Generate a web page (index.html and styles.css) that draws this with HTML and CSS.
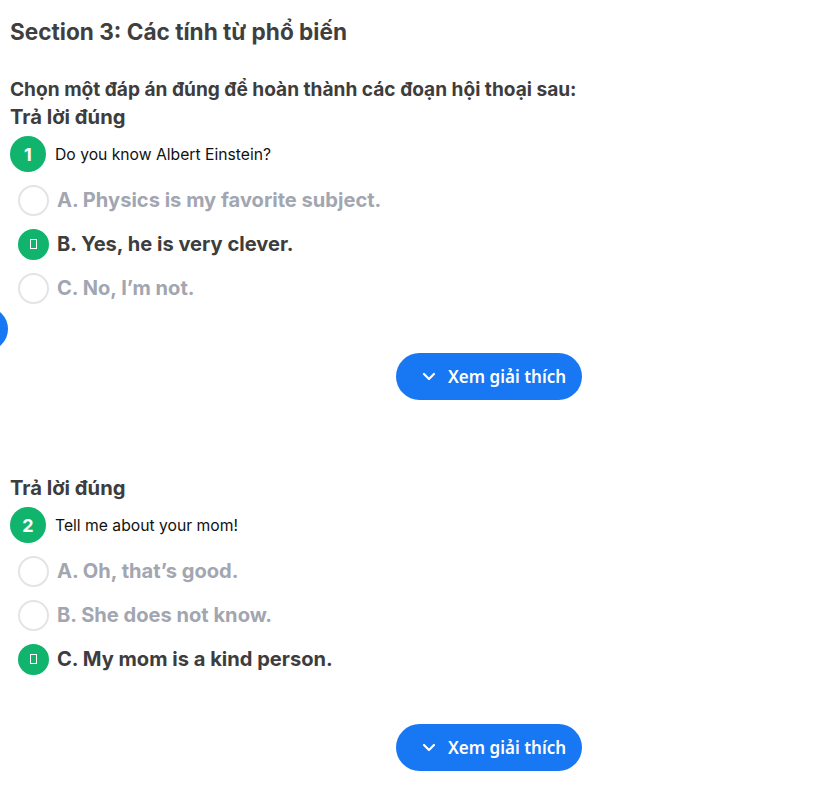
FILE: index.html
```html
<!DOCTYPE html>
<html lang="vi">
<head>
<meta charset="utf-8">
<title>Section 3</title>
<link rel="stylesheet" href="styles.css">
</head>
<body>
<div class="page">
  <h1 class="title">Section 3: Các tính từ phổ biến</h1>
  <p class="instr">Chọn một đáp án đúng để hoàn thành các đoạn hội thoại sau:</p>

  <section class="question">
    <div class="status">Trả lời đúng</div>
    <div class="qrow">
      <span class="num">1</span>
      <span class="qtext">Do you know Albert Einstein?</span>
    </div>
    <div class="options">
      <div class="opt"><span class="radio"></span><span class="otext">A. Physics is my favorite subject.</span></div>
      <div class="opt selected"><span class="radio"><span class="tofu"></span></span><span class="otext">B. Yes, he is very clever.</span></div>
      <div class="opt"><span class="radio"></span><span class="otext">C. No, I’m not.</span></div>
    </div>
    <div class="actions">
      <button class="explain"><svg class="chev" width="14" height="9" viewBox="0 0 14 9"><polyline points="2,2 7,7 12,2" fill="none" stroke="#fff" stroke-width="2.2" stroke-linecap="round" stroke-linejoin="round"/></svg>Xem giải thích</button>
    </div>
  </section>

  <section class="question second">
    <div class="status">Trả lời đúng</div>
    <div class="qrow">
      <span class="num">2</span>
      <span class="qtext">Tell me about your mom!</span>
    </div>
    <div class="options">
      <div class="opt"><span class="radio"></span><span class="otext">A. Oh, that’s good.</span></div>
      <div class="opt"><span class="radio"></span><span class="otext">B. She does not know.</span></div>
      <div class="opt selected"><span class="radio"><span class="tofu"></span></span><span class="otext">C. My mom is a kind person.</span></div>
    </div>
    <div class="actions">
      <button class="explain"><svg class="chev" width="14" height="9" viewBox="0 0 14 9"><polyline points="2,2 7,7 12,2" fill="none" stroke="#fff" stroke-width="2.2" stroke-linecap="round" stroke-linejoin="round"/></svg>Xem giải thích</button>
    </div>
  </section>
</div>
<div class="fab"></div>
</body>
</html>
```

FILE: styles.css
```css
* { box-sizing: border-box; }
html, body { margin: 0; padding: 0; background: #fff; }
body { font-family: Inter, "Noto Sans", sans-serif; color: #3d3d3d; }

.page { padding: 17px 10px 0 10px; }

.title {
  margin: 0;
  font-size: 22.6px;
  line-height: 30px;
  font-weight: 700;
  color: #3f3f3f;
}

.instr {
  margin: 29px 0 0 0;
  font-size: 19.1px;
  line-height: 27px;
  font-weight: 700;
  color: #3d3d3d;
}

.status {
  font-size: 20.2px;
  line-height: 27px;
  font-weight: 700;
  color: #3d3d3d;
}

.question.second { margin-top: 74px; }

.qrow {
  display: flex;
  align-items: center;
  gap: 9px;
  margin-top: 6px;
}

.num {
  width: 36px;
  height: 36px;
  border-radius: 50%;
  background: #10b46d;
  color: #fff;
  font-weight: 700;
  font-size: 18px;
  display: flex;
  align-items: center;
  justify-content: center;
}

.qtext {
  font-size: 15.7px;
  color: #111;
  font-weight: 400;
}

.options {
  display: flex;
  flex-direction: column;
  gap: 14px;
  margin-top: 13px;
  padding-left: 8px;
}

.opt {
  display: flex;
  align-items: center;
  gap: 8px;
  height: 30px;
}

.radio {
  width: 31px;
  height: 31px;
  border-radius: 50%;
  border: 2px solid #e3e4e8;
  display: flex;
  align-items: center;
  justify-content: center;
  flex: none;
}

.opt.selected .radio {
  background: #10b46d;
  border-color: #10b46d;
}

.tofu {
  width: 7px;
  height: 10px;
  border: 1px solid #fff;
}

.otext {
  font-size: 20.1px;
  font-weight: 700;
  color: #a2a6b0;
}

.opt.selected .otext { color: #3d3d3d; }

.actions {
  margin-top: 50px;
  padding-left: 386px;
}

.explain {
  display: flex;
  align-items: center;
  gap: 12px;
  height: 47px;
  width: 186px;
  padding: 0 0 0 26px;
  border: none;
  border-radius: 24px;
  background: #1877f2;
  color: #fff;
  font-family: "Noto Sans", "Open Sans", sans-serif;
  font-size: 17px;
  font-weight: 600;
  cursor: pointer;
}

.chev { flex: none; }

.fab {
  position: absolute;
  left: -36px;
  top: 307px;
  width: 44px;
  height: 44px;
  border-radius: 50%;
  background: #1877f2;
}
```
